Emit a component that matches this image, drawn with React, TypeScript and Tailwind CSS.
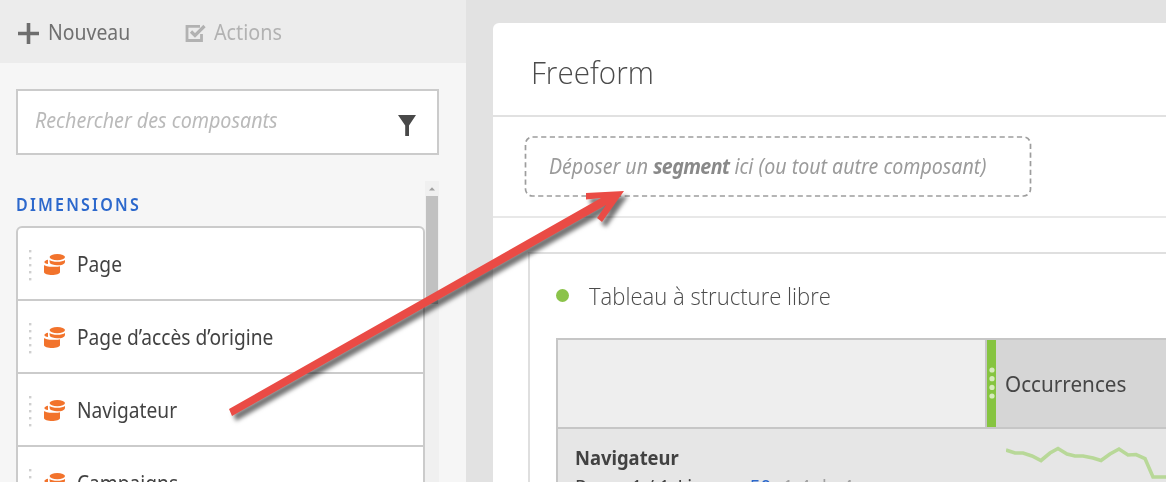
import type { ReactNode } from "react";

function StackIcon() {
  return (
    <svg width="22" height="21" viewBox="0 0 22 21" fill="#f2732c" className="shrink-0">
      <ellipse cx="13.300" cy="3.100" rx="7.700" ry="3.100" />
      <path d="M5.600 6C8 8.400 18.500 8.400 21 6V7.500C21 10 18 11.300 15.500 11.300C12 10.900 9 10.900 7 9.900C6 9.400 5.600 8.500 5.600 7.500Z" />
      <path d="M4 5.800V10C1.500 9.700 0.400 8.900 0.400 8C0.400 7 2 6.200 4 5.800Z" />
      <path d="M0 11C2.500 13.200 13.500 13.200 16 12.300V18C16 22 0 22 0 18Z" />
    </svg>
  );
}

function Grip() {
  return (
    <svg width="4" height="32" viewBox="0 0 4 32" fill="#cfcfcf" className="shrink-0">
      {[2, 9, 16, 23, 30].map((y) => (
        <rect key={y} x="1" y={y - 1} width="2.400" height="2.400" />
      ))}
    </svg>
  );
}

function Item({ children }: { children: ReactNode }) {
  return (
    <div className="flex h-[73px] shrink-0 items-center border-b-2 border-[#cbcbcb] pl-[10px]">
      <div className="pt-[3px]"><Grip /></div>
      <div className="ml-[12px] pt-[1px]"><StackIcon /></div>
      <span className="ml-[11px] origin-left scale-x-[0.913] text-[21px] leading-7 text-[#424242]">{children}</span>
    </div>
  );
}

export default function App() {
  return (
    <div className="relative flex h-[482px] w-[1166px] overflow-hidden whitespace-nowrap bg-[#e2e2e2] font-['Noto_Sans','Open_Sans',sans-serif]">
      <aside className="flex w-[466px] shrink-0 flex-col bg-[#f6f6f6]">
        <header className="flex h-[63px] shrink-0 items-center bg-[#ececec] pl-[18px] pt-[2px]">
          <svg width="21" height="21" viewBox="0 0 21 21" stroke="#6e6e6e" strokeWidth="3.600" className="mt-px">
            <path d="M0 10.500H21M10.500 0V21" />
          </svg>
          <span className="ml-[9px] w-[82px] text-[21px] text-[#707070]"><span className="inline-block origin-left scale-x-[0.925]">Nouveau</span></span>
          <svg width="22" height="19" viewBox="0 0 22 19" fill="none" stroke="#b2b2b2" className="ml-[55px] mt-px">
            <path d="M15 2.300H2V16.500H16.500V10" strokeWidth="2.800" />
            <path d="M6 7.500L10 11.500L19.500 2" strokeWidth="3.200" />
          </svg>
          <span className="ml-[7px] inline-block origin-left scale-x-[0.94] text-[21px] text-[#b2b2b2]">Actions</span>
        </header>
        <div className="ml-4 mt-[26px] flex h-[66px] w-[423px] shrink-0 items-center border-2 border-[#cbcbcb] bg-white pl-[17px] pr-[21px]">
          <span className="-mt-[2px] flex-1 origin-left scale-x-[0.938] text-[21px] italic text-[#bababa]">Rechercher des composants</span>
          <svg width="18" height="21" viewBox="0 0 18 21" fill="#494949" className="mt-[6px]">
            <path d="M0 0H18L11 10.500V21H7.200V10.500Z" />
          </svg>
        </div>
        <div className="mt-[26px] flex min-h-0 flex-1">
          <div className="ml-4 flex w-[409px] shrink-0 flex-col">
            <h2 className="h-[45px] shrink-0 pt-[12px] text-[17px] font-semibold leading-6 tracking-[2.350px] text-[#2c68cc]"><span className="inline-block origin-left scale-x-[0.94]">DIMENSIONS</span></h2>
            <div className="flex h-[320px] shrink-0 flex-col rounded-[6px] border-2 border-[#cbcbcb] bg-white">
              <Item>Page</Item>
              <Item>Page d’accès d’origine</Item>
              <Item>Navigateur</Item>
              <Item>Campaigns</Item>
            </div>
          </div>
          <div className="flex w-[14px] shrink-0 flex-col items-center bg-[#f0f0f0]">
            <svg width="14" height="15" viewBox="0 0 14 15" fill="#a0a0a0" className="shrink-0"><path d="M4 9.500L7 6.300L10 9.500Z" /></svg>
            <div className="h-[108px] w-3 bg-[#c1c1c1]" />
          </div>
        </div>
      </aside>
      <main className="ml-[27px] mt-[23px] flex w-[673px] shrink-0 flex-col rounded-tl-[6px] bg-white">
        <h1 className="h-[94px] shrink-0 border-b-2 border-[#e1e1e1] pl-[38px] pt-[27px] text-[32px] font-light leading-[44px] text-[#4b4b4b]"><span className="inline-block origin-left scale-x-[0.925] font-['Open_Sans']">Freeform</span></h1>
        <div className="h-[101px] shrink-0 border-b-2 border-[#e8e8e8] pl-[31px] pt-[18px]">
          <div className="relative flex h-[62px] w-[508px] items-center pl-[25px]">
            <svg width="508" height="62" viewBox="0 0 508 62" fill="none" className="absolute left-0 top-0">
              <rect x="1.500" y="2" width="505" height="59" rx="7" stroke="#9d9d9d" strokeWidth="1.700" strokeDasharray="5.200 3.450" />
            </svg>
            <span className="origin-left scale-x-[0.933] pt-px text-[21px] italic text-[#9b9b9b]">Déposer un <b className="font-bold tracking-[-0.650px] text-[#898989]">segment</b> ici (ou tout autre composant)</span>
          </div>
        </div>
        <section className="ml-[35px] mt-[34px] flex h-[240px] shrink-0 flex-col border-l-2 border-t-2 border-[#dfdfdf] pl-[26px]">
          <div className="flex h-[84px] shrink-0 items-center">
            <span className="-mt-[2px] size-[13px] rounded-full bg-[#8bc34a]" />
            <h2 className="ml-[20px] origin-left scale-x-[0.92] font-['Open_Sans'] text-[24px] font-light text-[#4b4b4b]">Tableau à structure libre</h2>
          </div>
          <div className="flex flex-1 flex-col border-l-2 border-t-2 border-[#c6c6c6] bg-[#e6e6e6]">
            <div className="flex h-[89px] shrink-0 border-b-2 border-[#c6c6c6]">
              <div className="w-[429px] border-r-2 border-[#c6c6c6] bg-[#eeeeee]" />
              <div className="flex w-[9px] items-center justify-center bg-[#86c440]">
                <svg width="6" height="32" viewBox="0 0 6 32" fill="#d7ebbd" className="-mt-px">
                  {[3, 11.700, 20.400, 29].map((y) => <circle key={y} cx="3" cy={y} r="2.600" />)}
                </svg>
              </div>
              <div className="flex flex-1 items-center bg-[#d6d6d6] pb-px pl-[9px] text-[22px] text-[#464646]"><span className="origin-left scale-x-[0.94]">Occurrences</span></div>
            </div>
            <div className="flex">
              <div className="w-[448px] shrink-0 pl-[17px] pt-[15px] text-[20px] leading-7 text-[#424242]">
                <div className="origin-left scale-x-[0.92] font-bold">Navigateur</div>
                <div className="flex origin-left scale-x-[0.94] pt-px text-[20px] leading-7">
                  <span className="w-[60px]">Page :</span>
                  <span className="w-[49px]">1 / 1</span>
                  <span className="w-[77px]">Lignes :</span>
                  <span className="w-[35px] text-[#2c68cc]">50</span>
                  <span className="text-[#a0a0a0]">1-4 de 4</span>
                </div>
              </div>
              <svg width="160" height="40" viewBox="0 0 160 40" fill="none" stroke="#b8d898" strokeWidth="3.600" className="mt-[15px] shrink-0">
                <path d="M0 6L9 9H17L26 12L35 16.500L44 9L52 4.500L61 10L69 12H77L87 14L95 16.500L104 10L113 5L122 11L130 10.500L139 14.500L147 33H160" />
              </svg>
            </div>
          </div>
        </section>
      </main>
      <svg width="1166" height="482" viewBox="0 0 1166 482" className="pointer-events-none absolute left-0 top-0">
        <g fill="#ea4b45" className="drop-shadow-[4px_5px_2px_rgba(0,0,0,0.550)]">
          <path d="M229 409L601 198L586 199.500V193L624 191L602 222L597 218L606 205L232 416Z" />
        </g>
      </svg>
    </div>
  );
}
